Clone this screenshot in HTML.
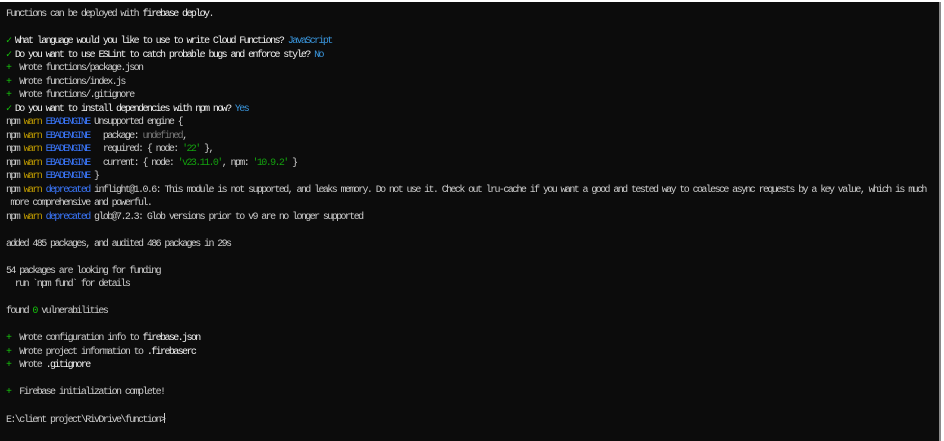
<!DOCTYPE html>
<html><head><meta charset="utf-8"><style>
html,body{margin:0;padding:0;}
body{width:944px;height:441px;background:#fff;overflow:hidden;position:relative;}
.bg{position:absolute;left:0;top:2px;width:939px;height:439px;background:#0c0c0c;}
.t{position:absolute;left:6px;top:8px;font-family:"Liberation Mono",monospace;font-size:10px;letter-spacing:-1.6px;line-height:13.5px;color:#cccccc;white-space:pre;}
.b{color:#f2f2f2}
.g{color:#16c60c}
.y{color:#c19c00}
.bl{color:#3b78ff}
.c{color:#3a96dd}
.gr{color:#767676}
.gs{color:#13a10e}
.edge{position:absolute;left:939px;top:2px;width:2px;height:439px;background:#8a8a8a;}
.cur{display:inline-block;width:1px;height:10px;background:#ccc;vertical-align:-1px}
</style></head><body>
<div class="bg"></div>
<div class="edge"></div>
<div class="t">Functions can be deployed with <span class="b">firebase deploy</span>.

<span class="g">✓</span> <span class="b">What language would you like to use to write Cloud Functions?</span> <span class="c">JavaScript</span>
<span class="g">✓</span> <span class="b">Do you want to use ESLint to catch probable bugs and enforce style?</span> <span class="c">No</span>
<span class="g">+</span>  Wrote functions/package.json
<span class="g">+</span>  Wrote functions/index.js
<span class="g">+</span>  Wrote functions/.gitignore
<span class="g">✓</span> <span class="b">Do you want to install dependencies with npm now?</span> <span class="c">Yes</span>
npm <span class="y">warn</span> <span class="bl">EBADENGINE</span> Unsupported engine {
npm <span class="y">warn</span> <span class="bl">EBADENGINE</span>   package: <span class="gr">undefined</span>,
npm <span class="y">warn</span> <span class="bl">EBADENGINE</span>   required: { node: <span class="gs">'22'</span> },
npm <span class="y">warn</span> <span class="bl">EBADENGINE</span>   current: { node: <span class="gs">'v23.11.0'</span>, npm: <span class="gs">'10.9.2'</span> }
npm <span class="y">warn</span> <span class="bl">EBADENGINE</span> }
npm <span class="y">warn</span> <span class="bl">deprecated</span> inflight@1.0.6: This module is not supported, and leaks memory. Do not use it. Check out lru-cache if you want a good and tested way to coalesce async requests by a key value, which is much
 more comprehensive and powerful.
npm <span class="y">warn</span> <span class="bl">deprecated</span> glob@7.2.3: Glob versions prior to v9 are no longer supported

added 485 packages, and audited 486 packages in 29s

54 packages are looking for funding
  run `npm fund` for details

found <span class="g">0</span> vulnerabilities

<span class="g">+</span>  Wrote configuration info to <span class="b">firebase.json</span>
<span class="g">+</span>  Wrote project information to <span class="b">.firebaserc</span>
<span class="g">+</span>  Wrote <span class="b">.gitignore</span>

<span class="g">+</span>  Firebase initialization complete!

E:\client project\RivDrive\function&gt;<span class="cur"></span></div>
</body></html>
